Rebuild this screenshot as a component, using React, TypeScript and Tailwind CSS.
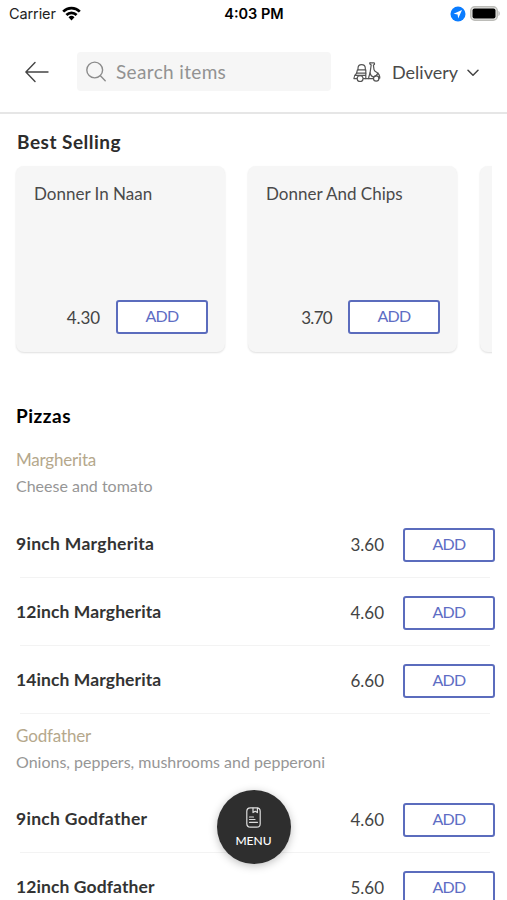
import React from "react";

type Item = { name: string; price: string; tracking: string };

const margherita: Item[] = [
  { name: "9inch Margherita", price: "3.60", tracking: "tracking-[0.3px]" },
  { name: "12inch Margherita", price: "4.60", tracking: "tracking-[0.1px]" },
  { name: "14inch Margherita", price: "6.60", tracking: "tracking-[0.1px]" },
];
const godfather: Item[] = [
  { name: "9inch Godfather", price: "4.60", tracking: "tracking-[0.3px]" },
  { name: "12inch Godfather", price: "5.60", tracking: "tracking-[0.1px]" },
];

function AddButton() {
  return (
    <button className="flex h-[34px] w-[92px] shrink-0 items-center justify-center rounded-[3px] border-2 border-[#5b6cbd] bg-white pb-[2px] text-[16px] leading-none tracking-[-0.7px] text-[#5e6dc4]">
      ADD
    </button>
  );
}

function Card({ name, price, priceTracking = "tracking-[-0.1px]" }: { name: string; price: string; priceTracking?: string }) {
  return (
    <div className="flex h-[186px] w-[209px] shrink-0 flex-col justify-between rounded-[8px] bg-[#f6f6f6] pt-[17px] pr-[17px] pb-[18px] pl-[18px] shadow-[0_1px_2px_rgba(0,0,0,0.13)]">
      <div className="text-[17px] leading-[22px] whitespace-nowrap text-[#4a4a4a]">{name}</div>
      <div className="flex items-center justify-end gap-[16px]">
        <span className={"text-[17px] leading-none text-[#444] " + priceTracking}>{price}</span>
        <AddButton />
      </div>
    </div>
  );
}

function Row({ item }: { item: Item }) {
  return (
    <div className="relative flex h-[68px] items-center pt-[2px] pr-[12px] pl-[16px]">
      <span className={"flex-1 pb-[2px] text-[17.500px] leading-none font-bold text-[#333] " + item.tracking}>{item.name}</span>
      <span className="mr-[19px] pb-[2px] text-[17px] leading-none text-[#444]">{item.price}</span>
      <AddButton />
      <div className="absolute right-[17px] bottom-0 left-[20px] h-px bg-[#f3f3f3]" />
    </div>
  );
}

function Scooter() {
  return (
    <svg width="28" height="20" viewBox="0 0 28 20" fill="none" stroke="#555" strokeWidth="1.200" strokeLinecap="round" strokeLinejoin="round">
      <path d="M5 7.800V6.300C5 4 6.500 2.600 8.600 2.600S12.300 4 12.300 6.300v1.500" />
      <path d="M4.400 7.800h8.400v3.400H3.600z" />
      <path d="M3.600 11.200C2 12.400 1 14.200.9 16.600h3.200M12.800 11.200v5.400M1.700 13.300h11.100" />
      <path d="M4.100 16.600a3 3 0 0 0 6 0 3 3 0 0 0-6 0M10.100 16.600h10.300" />
      <path d="M17 .9h3.800c.9 0 1 1.500.2 1.900l-.6.300.6 4.500c.3 1.600 2 2.400 3.500 3.300 1.600 1 2.300 2.500 2.300 5.200h-1" />
      <path d="M17 .9c-.7.700.4 1.900 1.200 2l-1.100 7.700c-.3 2-1.500 3.700-1.500 6" />
      <path d="M17 10.800c.4 1.800 1.500 3.600 3.300 4.200 1.800-.3 3.600-1.500 4.700-3.900" />
      <circle cx="23.200" cy="16.500" r="2.700" />
    </svg>
  );
}

export default function App() {
  return (
    <div className="relative h-[900px] w-[507px] overflow-hidden bg-white font-['Lato','Open_Sans',sans-serif]">
      <header className="h-[114px] border-b-2 border-[#e6e6e6]">
        <div className="grid h-[28px] grid-cols-3 items-center pr-[6px] pl-[9px] font-['Inter',sans-serif]">
          <div className="flex items-center gap-[6px]">
            <span className="text-[14.500px] leading-none tracking-[-0.1px] text-[#222]">Carrier</span>
            <svg className="-mt-[2px]" width="19" height="15" viewBox="0 0 19 15" fill="none" stroke="#000" strokeWidth="2.700">
              <path d="M1.200 5.600a11.700 11.700 0 0 1 16.600 0" />
              <path d="M4.400 9a7.200 7.200 0 0 1 10.200 0" />
              <path d="M9.500 14.400l-3-3.100a4.300 4.300 0 0 1 6 0z" fill="#000" stroke="none" />
            </svg>
          </div>
          <div className="pr-[2px] text-center text-[14.500px] leading-none font-semibold whitespace-nowrap text-black">4:03 PM</div>
          <div className="flex items-center justify-end gap-[4px]">
            <svg width="16" height="16" viewBox="0 0 16 16">
              <circle cx="8" cy="8" r="7.500" fill="#0a7cff" />
              <path d="M12 4L3.600 7.800l4 .6.600 4z" fill="#fff" />
            </svg>
            <svg className="-mt-[2px]" width="31" height="15" viewBox="0 0 31 15">
              <rect x="0.750" y="0.750" width="26.500" height="13.500" rx="4" fill="#e8e8e6" stroke="#bcbcb8" strokeWidth="1.500" />
              <rect x="2.500" y="2.500" width="23" height="10" rx="2" fill="#000" />
              <path d="M28.500 5c1.600.4 1.600 4.600 0 5z" fill="#aaa" />
            </svg>
          </div>
        </div>
        <div className="mt-[24px] flex items-center pl-[25px]">
          <svg width="24" height="22" viewBox="0 0 24 22" fill="none" stroke="#444" strokeWidth="1.400" strokeLinecap="round" strokeLinejoin="round">
            <path d="M10 1.500L.9 11l9.100 9.500M1 11h22" />
          </svg>
          <div className="ml-[28px] flex h-[39px] w-[254px] items-center rounded-[4px] bg-[#f6f6f6] pl-[9px]">
            <svg width="20" height="21" viewBox="0 0 20 21" fill="none" stroke="#8c8c8c" strokeWidth="1.400" strokeLinecap="round">
              <circle cx="8.700" cy="9" r="7.900" />
              <path d="M14.400 14.800l4.800 5" />
            </svg>
            <span className="ml-[10px] text-[19px] leading-none tracking-[0.350px] text-[#929292]">Search items</span>
          </div>
          <div className="ml-[22px]">
            <Scooter />
          </div>
          <span className="ml-[11px] text-[18px] leading-none text-[#4a4a4a]">Delivery</span>
          <svg className="mt-[3px] ml-[9px]" width="12" height="8" viewBox="0 0 12 8" fill="none" stroke="#444" strokeWidth="1.500" strokeLinecap="round" strokeLinejoin="round">
            <path d="M1 1.300l5 5 5-5" />
          </svg>
        </div>
      </header>

      <section className="px-[16px] pt-[15px]">
        <h2 className="pl-px text-[19px] leading-[26px] font-bold tracking-[0.500px] text-[#2c2c2c]">Best Selling</h2>
        <div className="mt-[7px] -ml-[4px] flex h-[194px] w-[480px] gap-[23px] overflow-hidden pt-[4px] pl-[4px]">
          <Card name="Donner In Naan" price="4.30" />
          <Card name="Donner And Chips" price="3.70" priceTracking="tracking-[-0.700px]" />
          <div className="h-[186px] w-[209px] shrink-0 rounded-[8px] bg-[#f6f6f6] shadow-[0_1px_2px_rgba(0,0,0,0.13)]" />
        </div>
      </section>

      <section>
        <h2 className="mt-[47px] pl-[16px] text-[19px] leading-[26px] font-bold tracking-[0.500px] text-black">Pizzas</h2>
        <div className="mt-[18px] h-[63px] pl-[16px]">
          <div className="text-[17px] leading-[26px] tracking-[-0.200px] text-[#b5a88c]">Margherita</div>
          <div className="text-[16px] leading-[26px] text-[#969696]">Cheese and tomato</div>
        </div>
        {margherita.map((i) => (
          <Row key={i.name} item={i} />
        ))}
        <div className="h-[71px] pt-[9px] pl-[16px]">
          <div className="text-[17px] leading-[26px] tracking-[-0.150px] text-[#b5a88c]">Godfather</div>
          <div className="text-[16px] leading-[26px] text-[#969696]">Onions, peppers, mushrooms and pepperoni</div>
        </div>
        {godfather.map((i) => (
          <Row key={i.name} item={i} />
        ))}
      </section>

      <button className="absolute top-[790px] left-[217px] flex h-[74px] w-[74px] flex-col items-center rounded-full bg-[#2e2e2e] pt-[17px] text-white shadow-[0_2px_8px_rgba(0,0,0,0.25)]">
        <svg className="mr-[1px]" width="15" height="21" viewBox="0 0 15 21" fill="none" stroke="#ddd" strokeWidth="1.200" strokeLinecap="round" strokeLinejoin="round">
          <rect x="0.800" y="0.800" width="13.400" height="19.400" rx="3.500" />
          <path d="M7 1v4.600l2.200-1.400 2.200 1.400V1M3.500 10h4M3.500 12.500h5.500M3.500 15.300h8" />
        </svg>
        <span className="mt-[6px] mr-[1px] text-[12px] leading-[14px] font-medium">MENU</span>
      </button>
    </div>
  );
}
